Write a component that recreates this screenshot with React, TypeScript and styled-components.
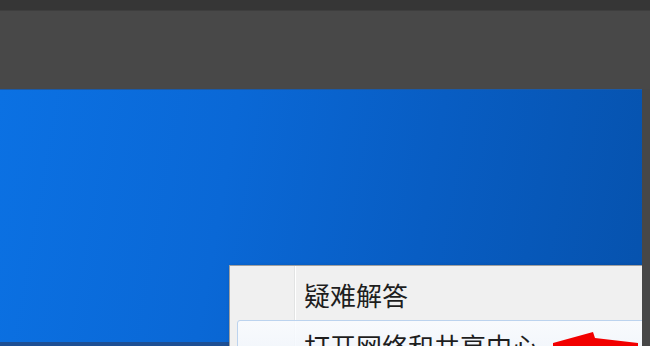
import React from "react";
import styled, { createGlobalStyle } from "styled-components";

const GlobalStyle = createGlobalStyle`
  html, body { margin: 0; padding: 0; background: #484848; overflow: hidden; }
  body { font-family: "Noto Sans CJK SC", "Noto Sans", sans-serif; }
`;

const Page = styled.div`
  width: 650px;
  height: 346px;
  display: flex;
  flex-direction: column;
  overflow: hidden;
`;

const TopBar = styled.div`
  height: 10px;
  background: #363636;
  flex-shrink: 0;
`;

const Toolbar = styled.div`
  height: 79px;
  background: #484848;
  border-top: 1px solid #3e3e3e;
  box-sizing: border-box;
  flex-shrink: 0;
`;

const Content = styled.div`
  flex: 1;
  display: flex;
  min-height: 0;
`;

const Desktop = styled.div`
  flex: 1;
  position: relative;
  overflow: hidden;
  display: flex;
  flex-direction: column;
  justify-content: flex-end;
  background: linear-gradient(100deg, #0b71e3 0%, #0a68d6 35%, #085dc3 65%, #0652ad 100%);
  border-top: 1px solid #1a5aa8;
`;

const Taskbar = styled.div`
  height: 4px;
  background: #1d4f94;
`;

const SideStrip = styled.div`
  width: 8px;
  background: #474747;
  flex-shrink: 0;
`;

const Menu = styled.div`
  position: absolute;
  left: 229px;
  top: 175px;
  width: 440px;
  height: 140px;
  box-sizing: border-box;
  padding: 3px 0;
  border: 1px solid #a0a0a0;
  display: flex;
  flex-direction: column;
  gap: 1px;
  background: linear-gradient(
    to right,
    #f0f0f0 64px,
    #e2e3e3 64px,
    #e2e3e3 65px,
    #ffffff 65px,
    #ffffff 66px,
    #f0f0f0 66px
  );
  box-shadow: 2px 2px 4px rgba(0, 0, 0, 0.35);
`;

const Item = styled.div<{ $active?: boolean }>`
  height: 50px;
  box-sizing: border-box;
  margin-left: 7px;
  padding-left: 66px;
  display: flex;
  align-items: center;
  font-family: "Noto Sans CJK SC", sans-serif;
  font-size: 26px;
  font-weight: 400;
  color: #1e1e1e;
  border: 1px solid ${(p) => (p.$active ? "#bcd3ee" : "transparent")};
  border-radius: 3px;
  background: ${(p) =>
    p.$active
      ? "linear-gradient(to bottom, rgba(250,252,255,0.85), rgba(238,244,252,0.85))"
      : "transparent"};
  white-space: nowrap;
`;

const Arrow = styled.svg`
  position: absolute;
  left: 540px;
  top: 228px;
  width: 102px;
  height: 40px;
`;

export default function App() {
  return (
    <>
      <GlobalStyle />
      <Page>
        <TopBar />
        <Toolbar />
        <Content>
          <Desktop>
            <Taskbar />
            <Menu>
              <Item>疑难解答</Item>
              <Item $active>打开网络和共享中心</Item>
            </Menu>
            <Arrow viewBox="0 0 102 40">
              <polygon
                points="13,25 53,14 55,20 98,25 98,40 13,40"
                fill="#f20000"
              />
            </Arrow>
          </Desktop>
          <SideStrip />
        </Content>
      </Page>
    </>
  );
}
